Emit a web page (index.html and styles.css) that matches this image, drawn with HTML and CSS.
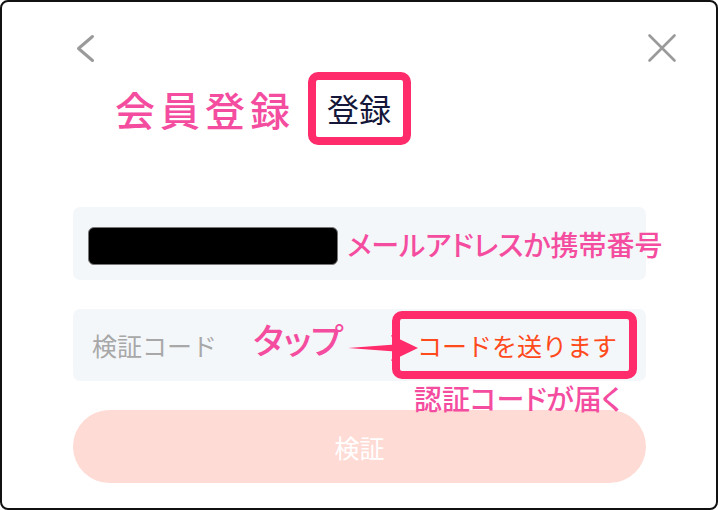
FILE: index.html
```html
<!DOCTYPE html>
<html lang="ja">
<head>
  <meta charset="UTF-8">
  <title>会員登録</title>
  <meta name="viewport" content="width=device-width, initial-scale=1.0">
  <link rel="stylesheet" href="styles.css">
</head>
<body>
  <div class="frame">
    <!-- ヘッダー -->
    <div class="top-bar">
      <svg class="icon" width="30" height="30" viewBox="0 0 30 30">
        <path d="M19.5 3.5 L5.5 15.5 L19.5 27.5" fill="none" stroke="#9a9a9a" stroke-width="3" stroke-linecap="round" stroke-linejoin="round"/>
      </svg>
      <svg class="icon" width="30" height="30" viewBox="0 0 30 30">
        <path d="M2.5 2.5 L27.5 27.5 M27.5 2.5 L2.5 27.5" fill="none" stroke="#9a9a9a" stroke-width="2.6" stroke-linecap="round"/>
      </svg>
    </div>

    <div class="title-row">
      <span class="note-title">会員登録</span>
      <span class="mark-box">登録</span>
    </div>

    <!-- メール入力 -->
    <div class="field field-account">
      <div class="masked"></div>
      <span class="note note-account">メールアドレスか携帯番号</span>
    </div>

    <!-- 認証コード入力 -->
    <div class="field field-code">
      <span class="placeholder">検証コード</span>
      <span class="divider"></span>
      <span class="send-code">コードを送ります</span>

      <span class="note note-tap">タップ</span>
      <svg class="arrow" width="70" height="36" viewBox="0 0 70 36">
        <polygon points="0,18 47,14.5 43,5 70,18 43,31 47,21.5" fill="#ff2b6a"/>
      </svg>
      <div class="mark-send"></div>
      <span class="note note-arrive">認証コードが届く</span>
    </div>

    <button class="verify-button">検証</button>
  </div>
</body>
</html>
```

FILE: styles.css
```css
* {
  box-sizing: border-box;
}

body {
  margin: 0;
  font-family: "Noto Sans CJK JP", "Noto Sans", sans-serif;
  background: #ffffff;
}

.frame {
  width: 718px;
  height: 510px;
  border: 2px solid #111;
  border-radius: 8px;
  padding: 0 70px 0 71px;
  overflow: hidden;
}

.top-bar {
  display: flex;
  justify-content: space-between;
  padding-top: 31px;
  margin-right: -31px;
}

.icon {
  display: block;
}

.title-row {
  display: flex;
  align-items: center;
  margin-top: 9px;
}

.note-title {
  margin-left: 42px;
  font-size: 40px;
  font-weight: 500;
  letter-spacing: 5px;
  color: #f44d9f;
  line-height: 1;
}

.mark-box {
  margin-left: 13px;
  border: 8px solid #ff2b6a;
  border-radius: 10px;
  padding: 0 12px 0 11px;
  font-size: 32px;
  line-height: 57px;
  color: #15173a;
}

.note {
  font-weight: 500;
  color: #f44d9f;
  font-feature-settings: "palt";
  white-space: nowrap;
  line-height: 1;
}

.field {
  display: flex;
  align-items: center;
  height: 73px;
  background-color: #f4f7fa;
  border-radius: 7px;
}

.field-account {
  margin-top: 62px;
  padding-left: 15px;
}

.masked {
  flex-shrink: 0;
  width: 250px;
  height: 38px;
  margin-top: 5px;
  background-color: #000;
  border: 1px solid #777;
  border-radius: 6px;
}

.note-account {
  flex-shrink: 0;
  margin-left: 9px;
  font-size: 28px;
}

.field-code {
  position: relative;
  margin-top: 29px;
  height: 72px;
  padding: 0 29px 0 19px;
}

.placeholder {
  flex: 1;
  font-size: 25px;
  color: #a8a8a8;
}

.divider {
  width: 2px;
  height: 35px;
  background-color: #c4c4c4;
}

.send-code {
  margin-left: 22px;
  font-size: 25px;
  color: #ff4a1c;
}

.note-tap {
  position: absolute;
  left: 180px;
  top: 12px;
  font-size: 35px;
}

.arrow {
  position: absolute;
  left: 275px;
  top: 21px;
}

.mark-send {
  position: absolute;
  left: 319px;
  top: 2px;
  width: 245px;
  height: 68px;
  border: 8px solid #ff2b6a;
  border-radius: 10px;
}

.note-arrive {
  position: absolute;
  left: 341px;
  top: 75px;
  font-size: 28px;
}

.verify-button {
  display: block;
  width: 100%;
  height: 73px;
  margin-top: 29px;
  border: none;
  border-radius: 37px;
  background-color: #ffdbd5;
  color: #ffffff;
  font-family: inherit;
  font-size: 25px;
}
```
